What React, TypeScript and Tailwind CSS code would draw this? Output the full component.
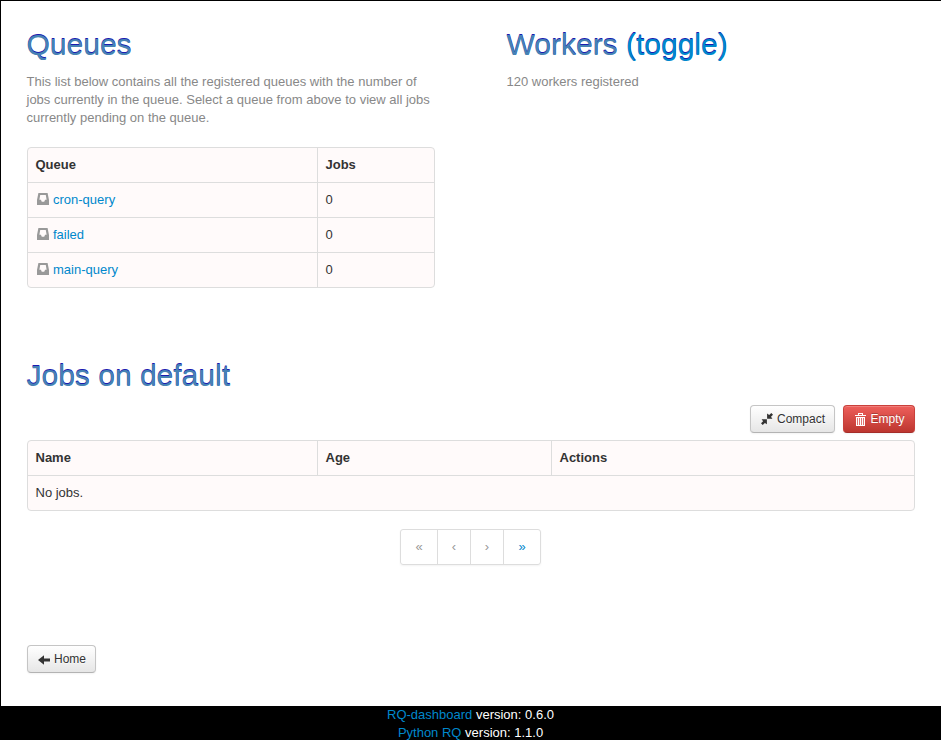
import React from 'react';

function InboxIcon() {
  return (
    <svg width="12" height="12" viewBox="0 0 12 12" className="-mt-0.5 ml-[1.5px] mr-1 shrink-0">
      <path fill="#999" fillRule="evenodd" d="M1.4 0h9.2L12 7v5H0V7L1.4 0zM3.2 2L2.4 6.8h1.5l.9 1.9h2.4l.9-1.9h1.5L8.8 2H3.2z" />
    </svg>
  );
}

function Heading({ children }: { children: React.ReactNode }) {
  return (
    <h1 className="text-[30px] leading-9 text-[#4682b4] [text-shadow:0_-1px_0_#1b1bb0]">{children}</h1>
  );
}

const buttonBase =
  'flex h-7 items-center rounded-[4px] border text-xs leading-[18px] shadow-[inset_0_1px_0_rgba(255,255,255,0.2),0_1px_2px_rgba(0,0,0,0.05)]';
const lightButton =
  'border-[#c5c5c5] border-b-[#b3b3b3] bg-linear-to-b from-white to-[#e6e6e6] text-[#333] [text-shadow:0_1px_1px_rgba(255,255,255,0.75)]';

const queues = ['cron-query', 'failed', 'main-query'];

export default function App() {
  return (
    <div className="h-[740px] overflow-hidden bg-black pl-px pt-px font-['Liberation_Sans',Arial,sans-serif] text-[13px] leading-[18px] text-[#333]">
      <div className="h-[705px] bg-white pl-[25.5px] pr-[26.5px] pt-[26px]">
        <div className="flex h-[331px]">
          <section className="w-[480px]">
            <Heading>Queues</Heading>
            <p className="mt-[10px] w-[408px] text-[#888]">
              This list below contains all the registered queues with the number of jobs currently in the queue. Select a queue from above to view all jobs currently pending on the queue.
            </p>
            <div className="mt-[20px] w-[408px] overflow-hidden rounded-[4px] border border-[#ddd] bg-[#fffafa]">
              <div className="flex h-[34px] font-bold">
                <div className="w-[289px] px-2 py-2">Queue</div>
                <div className="flex-1 border-l border-[#ddd] px-2 py-2">Jobs</div>
              </div>
              {queues.map((name) => (
                <div key={name} className="flex h-[35px] border-t border-[#ddd]">
                  <div className="flex w-[289px] items-center px-2 text-[#0088cc]">
                    <InboxIcon />
                    <a>{name}</a>
                  </div>
                  <div className="flex-1 border-l border-[#ddd] px-2 py-2">0</div>
                </div>
              ))}
            </div>
          </section>
          <section>
            <Heading>
              Workers <a className="text-[#0088cc]">(toggle)</a>
            </Heading>
            <p className="mt-[10px] text-[#888]">120 workers registered</p>
          </section>
        </div>

        <Heading>Jobs on default</Heading>
        <div className="mt-[11px] flex justify-end gap-2">
          <button className={`${buttonBase} ${lightButton} w-[85px] pl-[10.5px]`}>
            <svg width="12" height="12" viewBox="0 0 12 12" className="mr-1 shrink-0">
              <path fill="#333" d="M10.3 0L12 1.7 10 3.7 11.4 5.7H6.1V.6L8.2 2zM.6 6.2h5.3v5.1L3.9 9.9 1.7 12 0 10.3 2.1 8.2z" />
            </svg>
            Compact
          </button>
          <button className={`${buttonBase} w-[72px] border-[#c9403b] border-b-[#a52d29] bg-linear-to-b from-[#ee5f5b] to-[#bd362f] pl-[11.5px] text-white [text-shadow:0_-1px_0_rgba(0,0,0,0.25)]`}>
            <svg width="11" height="13" viewBox="0 0 11 13" className="mr-[4.5px] shrink-0">
              <path fill="#fff" fillRule="evenodd" d="M3 0h5v2h3v1H0V2h3zM4 1v1h3V1zM1 4h9v9H1z" />
              <path fill="none" stroke="#d9534f" strokeWidth=".8" d="M2.5 5v7M4.5 5v7M6.5 5v7M8.5 5v7" />
            </svg>
            Empty
          </button>
        </div>

        <div className="mt-[7px] overflow-hidden rounded-[4px] border border-[#ddd] bg-[#fffafa]">
          <div className="flex h-[34px] font-bold">
            <div className="w-[289px] p-2">Name</div>
            <div className="w-[234px] border-l border-[#ddd] p-2">Age</div>
            <div className="flex-1 border-l border-[#ddd] p-2">Actions</div>
          </div>
          <div className="h-[35px] border-t border-[#ddd] p-2">No jobs.</div>
        </div>

        <div className="mt-[18px] flex justify-center">
          <div className="flex h-9 rounded-[3px] border border-[#ddd] leading-[34px] text-[#999] shadow-[0_1px_2px_rgba(0,0,0,0.05)]">
            <span className="w-9 text-center">«</span>
            <span className="w-[33px] border-l border-[#ddd] text-center">‹</span>
            <span className="w-[33px] border-l border-[#ddd] text-center">›</span>
            <span className="w-[37px] border-l border-[#ddd] text-center text-[#0088cc]">»</span>
          </div>
        </div>

        <button className={`${buttonBase} ${lightButton} mt-[80px] w-[69px] pl-[10.5px]`}>
          <svg width="12" height="10" viewBox="0 0 12 10" className="mr-1 mt-px shrink-0">
            <path fill="#333" d="M0 5L6 .2V3.5h6v3H6v3.3z" />
          </svg>
          Home
        </button>
      </div>
      <footer className="pr-px text-center text-white">
        <div><a className="text-[#0088cc]">RQ-dashboard</a> version: 0.6.0</div>
        <div><a className="text-[#0088cc]">Python RQ</a> version: 1.1.0</div>
      </footer>
    </div>
  );
}
